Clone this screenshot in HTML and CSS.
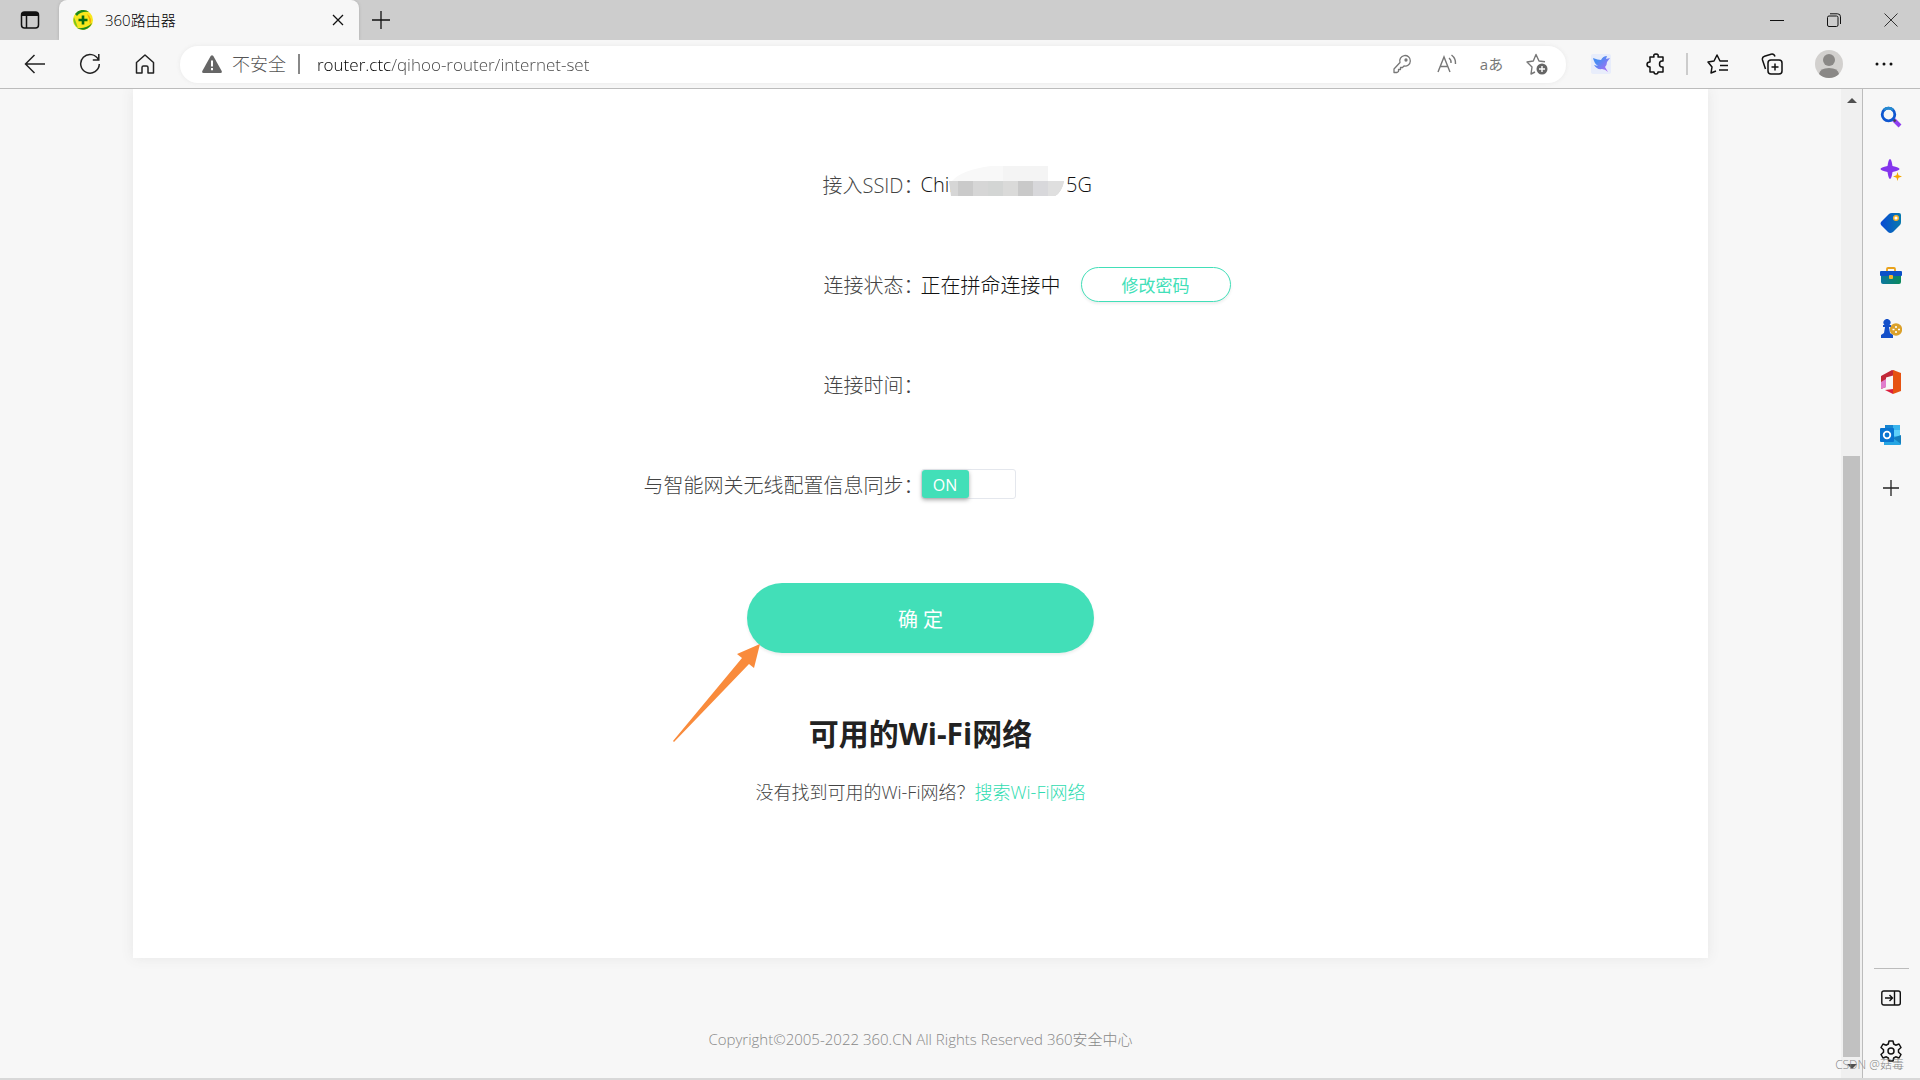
FILE: index.html
```html
<!DOCTYPE html>
<html lang="zh-CN">
<head>
    <meta charset="UTF-8">
    <meta name="viewport" content="width=device-width, initial-scale=1.0">
    <title>360路由器</title>
    <link rel="stylesheet" href="styles.css">
</head>
<body>

<header class="tab-bar">
    <button class="icon-btn tab-menu" aria-label="标签页操作">
        <svg width="20" height="20" viewBox="0 0 20 20" fill="none" stroke="#111" stroke-width="1.5"><rect x="1.5" y="2" width="17" height="16" rx="3"/><path d="M2 4.500h16M6.500 6v12"/><path d="M2 4h16" stroke-width="4"/></svg>
    </button>
    <div class="tab">
        <svg width="20" height="20" viewBox="0 0 20 20"><circle cx="10" cy="10" r="10" fill="#f8e71c"/><path d="M2 4A10 10 0 0 1 16 2Q8 1 4 6ZM4 18a10 10 0 0 0 15-5q-5 6-15 5Z" fill="#1d8a1d"/><path d="M1 7q-2 6 4 11-2-6-4-11Z" fill="#7ac520"/><path d="M14 4q6 4 3 11 0-6-3-11Z" fill="#f5a800"/><path d="M10 5.500v9M5.500 10h9" stroke="#066b12" stroke-width="2.600"/></svg>
        <span class="tab-title">360路由器</span>
        <button class="icon-btn" aria-label="关闭标签页">
            <svg width="12" height="12" viewBox="0 0 12 12" stroke="#111" stroke-width="1.300"><path d="M1 1l10 10M11 1L1 11"/></svg>
        </button>
    </div>
    <button class="icon-btn new-tab" aria-label="新建标签页">
        <svg width="18" height="18" viewBox="0 0 18 18" stroke="#111" stroke-width="1.300"><path d="M9 0v18M0 9h18"/></svg>
    </button>
    <div class="window-controls">
        <button class="icon-btn" aria-label="最小化"><svg width="14" height="14" viewBox="0 0 14 14" stroke="#111"><path d="M0 7.500h14"/></svg></button>
        <button class="icon-btn" aria-label="还原"><svg width="14" height="14" viewBox="0 0 14 14" fill="none" stroke="#111"><rect x=".5" y="3" width="10.500" height="10.500" rx="1.500"/><path d="M3 .8h7.500a3 3 0 0 1 3 3V11"/></svg></button>
        <button class="icon-btn" aria-label="关闭"><svg width="14" height="14" viewBox="0 0 14 14" stroke="#333"><path d="M.5.5l13 13M13.500.5l-13 13"/></svg></button>
    </div>
</header>

<nav class="toolbar">
    <div class="nav-buttons">
        <button class="icon-btn" aria-label="后退"><svg width="22" height="22" viewBox="0 0 22 22" fill="none" stroke="#222" stroke-width="1.500"><path d="M21 11H1.500M10.500 2l-9 9 9 9"/></svg></button>
        <button class="icon-btn" aria-label="刷新"><svg width="22" height="22" viewBox="0 0 22 22" fill="none" stroke="#222" stroke-width="1.500"><path d="M19.500 7A9.300 9.300 0 1 0 20.300 11M19.800 1v6h-6"/></svg></button>
        <button class="icon-btn" aria-label="主页"><svg width="20" height="20" viewBox="0 0 20 20" fill="none" stroke="#222" stroke-width="1.500" stroke-linejoin="round"><path d="M1.500 8.500L10 1l8.500 7.500V19H13v-5.500q0-1.500-1.500-1.500h-3Q7 12 7 13.500V19H1.500Z"/></svg></button>
    </div>
    <div class="address-bar">
        <svg width="20" height="18" viewBox="0 0 20 18"><path d="M8.700 1Q10-.7 11.300 1l8.400 15q.6 2-1.200 2h-17Q-.3 18 .3 16Z" fill="#666"/><path d="M10 5.500v6M10 13v2.200" stroke="#fff" stroke-width="2"/></svg>
        <label class="security" for="url">不安全</label>
        <input class="url" id="url" type="text" value="router.ctc/qihoo-router/internet-set" spellcheck="false">
        <div class="address-icons">
            <button class="icon-btn" aria-label="密码"><svg width="20" height="20" viewBox="0 0 20 20" fill="none" stroke="#777" stroke-width="1.300" stroke-linejoin="round"><path d="M8 8.500A5.300 5.300 0 1 1 12 12l-1.500 1.500h-2v2h-2v2L5 18.500H2V15Z"/><circle cx="14" cy="6" r="1" fill="#777"/></svg></button>
            <button class="icon-btn" aria-label="朗读"><svg width="20" height="20" viewBox="0 0 20 20" fill="none" stroke="#777" stroke-width="1.400"><path d="M1 18L7 3l6 15M3.200 12.500h7.600M12 4q2.500 2 2 5M14.500 1q4.500 3.500 4 9"/></svg></button>
            <button class="icon-btn translate" aria-label="翻译">aあ</button>
            <button class="icon-btn" aria-label="收藏"><svg width="22" height="22" viewBox="0 0 22 22" fill="none" stroke="#777" stroke-width="1.400" stroke-linejoin="round"><path d="M9 19l-4 2 1-7-5-5 6.300-1L10 1.500 13 8l6 .8"/><circle cx="16" cy="16" r="5.500" fill="#666" stroke="none"/><path d="M16 13v6M13 16h6" stroke="#fff"/></svg></button>
        </div>
    </div>
    <div class="extensions">
        <button class="icon-btn" aria-label="迅雷"><svg width="20" height="20" viewBox="0 0 20 20"><defs><linearGradient id="bird" x1="0" y1="0" x2="1" y2="1"><stop offset="0.300" stop-color="#4b8df3"/><stop offset="1" stop-color="#c266f5"/></linearGradient></defs><rect width="20" height="20" rx="2" fill="#e8edfb"/><path d="M2 4q5 2 8 2 2-4 6-4l-1 3 4-1-3 4q0 3-2 5l3 5q-3-3-6-3-5 1-8-4l4 1Q3 9 2 4Z" fill="url(#bird)"/></svg></button>
        <button class="icon-btn" aria-label="扩展"><svg width="20" height="22" viewBox="0 0 20 22" fill="none" stroke="#111" stroke-width="1.500" stroke-linejoin="round"><path d="M4 4h4q-1-3 2-3t2 3h5v4h-1q-2.500 0-2.500 3t2.500 3h1v5h-5q0 2-2 2t-2-2H4v-5q-3 0-3-2.500T4 9Z"/></svg></button>
    </div>
    <div class="profile">
        <button class="icon-btn" aria-label="收藏夹"><svg width="22" height="20" viewBox="0 0 22 20" fill="none" stroke="#111" stroke-width="1.500" stroke-linejoin="round"><path d="M9 17l-5 2 1-6-4-5 6-1 3-6 3 6h8M13 11.500h8M12 16h9"/></svg></button>
        <button class="icon-btn" aria-label="集锦"><svg width="22" height="22" viewBox="0 0 22 22" fill="none" stroke="#111" stroke-width="1.500"><rect x="7" y="7" width="14" height="14" rx="3"/><path d="M14 10.500v7M10.500 14h7M4.500 16L1.500 7Q.8 4 3.500 3.200L10 1.200q3-.7 4 2.300"/></svg></button>
        <button class="icon-btn" aria-label="个人资料"><svg width="28" height="28" viewBox="0 0 28 28"><circle cx="14" cy="14" r="14" fill="#d2d0ce"/><circle cx="14" cy="10" r="6" fill="#8a8886"/><path d="M4 24q1-6 10-6t10 6q-4 4-10 4T4 24Z" fill="#8a8886"/></svg></button>
        <button class="icon-btn" aria-label="更多"><svg width="18" height="6" viewBox="0 0 18 6" fill="#111"><circle cx="2" cy="3" r="1.500"/><circle cx="9" cy="3" r="1.500"/><circle cx="16" cy="3" r="1.500"/></svg></button>
    </div>
</nav>

<div class="browser-body">
    <div class="page">
        <main class="card">
            <div class="row">
                <span class="row-label">接入SSID：</span>
                <div class="row-value">Chin
                    <svg class="mosaic" width="115" height="30" viewBox="0 0 115 30">
                        <path d="M3 15Q12 4 42 0h57v15Z" fill="#f8f8f8"/>
                        <path d="M54 0h45v15H54Z" fill="#f4f4f4"/>
                        <path d="M0 15h115q-2 11-9 15H2Z" fill="#d6d6d6"/>
                        <path d="M9 15h15v15H9Z" fill="#cacaca"/>
                        <path d="M39 15h15v15H39Z" fill="#d3d5d4"/>
                        <path d="M54 15h15v15H54Z" fill="#dadad9"/>
                        <path d="M69 15h15v15H69Z" fill="#c9c9c9"/>
                        <path d="M84 15h15v15H84Z" fill="#d8d8db"/>
                        <path d="M99 15h16q-2 11-9 15h-7Z" fill="#dfdfdf"/>
                    </svg>5G</div>
            </div>
            <div class="row">
                <span class="row-label">连接状态：</span>
                <div class="row-value">正在拼命连接中 <button class="btn-outline">修改密码</button></div>
            </div>
            <div class="row">
                <span class="row-label">连接时间：</span>
                <div class="row-value"></div>
            </div>
            <div class="row">
                <label class="row-label" for="sync">与智能网关无线配置信息同步：</label>
                <div class="row-value">
                    <span class="switch"><input id="sync" type="checkbox" checked><span class="switch-knob">ON</span></span>
                </div>
            </div>
            <div class="submit">
                <button class="btn-primary">确 定</button>
                <svg class="arrow" width="88" height="98" viewBox="0 0 88 98"><path d="M87 0L81 24l-5-4L1 98 0 97 69 14l-5-4Z" fill="#f98b3c"/></svg>
            </div>
            <h2 class="wifi-title">可用的Wi-Fi网络</h2>
            <p class="wifi-tip">没有找到可用的Wi-Fi网络？<a href="#">搜索Wi-Fi网络</a></p>
        </main>
        <footer class="footer">Copyright©2005-2022 360.CN All Rights Reserved 360安全中心</footer>
    </div>

    <div class="scrollbar">
        <svg width="10" height="5" viewBox="0 0 10 5"><path d="M0 5L5 0l5 5Z" fill="#505050"/></svg>
        <div class="scroll-thumb"></div>
        <svg width="10" height="5" viewBox="0 0 10 5"><path d="M0 0l5 5 5-5Z" fill="#505050"/></svg>
    </div>

    <aside class="sidebar">
        <button class="icon-btn" aria-label="搜索"><svg width="22" height="22" viewBox="0 0 22 22" fill="none"><path d="M13.500 13.500L20 20" stroke="#8f3fef" stroke-width="4"/><path d="M12.500 12.500l3 3" stroke="#444" stroke-width="2"/><circle cx="8.500" cy="8.500" r="6.300" stroke="#0f56d0" stroke-width="2.800"/><path d="M4 4a6.300 6.300 0 0 1 9 0" stroke="#258bd0" stroke-width="2.800"/></svg></button>
        <button class="icon-btn" aria-label="发现"><svg width="22" height="22" viewBox="0 0 22 22"><path d="M10 0q1.500 0 2.500 7 7 1.500 7 3t-7 3q-1 7-2.500 7t-2.500-7q-7-1.500-7-3t7-3Q8.500 0 10 0Z" fill="#8435ed"/><path d="M17.500 13l1 3.300L22 17.500l-3.500 1.200-1 3.300-1-3.300L13 17.500l3.500-1.200Z" fill="#f5a800"/></svg></button>
        <button class="icon-btn" aria-label="购物"><svg width="22" height="22" viewBox="0 0 22 22"><defs><linearGradient id="tag"><stop stop-color="#0849d5"/><stop offset="1" stop-color="#087aad"/></linearGradient></defs><path d="M12 1h7q2 0 2 2v7q0 2-1 3l-7 7q-3 2-5 0l-7-7q-1-2 0-3l8-8q1-1 3-1Z" fill="url(#tag)"/><circle cx="16" cy="6" r="2.300" fill="#fff" stroke="#f8b32b" stroke-width="1.500"/></svg></button>
        <button class="icon-btn" aria-label="工具"><svg width="22" height="18" viewBox="0 0 22 18"><defs><linearGradient id="box"><stop stop-color="#0b77a0"/><stop offset="1" stop-color="#0b8a5c"/></linearGradient></defs><path d="M7 5V2q0-1 1-1h6q1 0 1 1v3" fill="none" stroke="#e9a21b" stroke-width="1.800"/><path d="M1 7h20v8q0 2-2 2H3q-2 0-2-2Z" fill="url(#box)"/><rect y="4" width="22" height="5" rx="1" fill="#0c50c8"/><rect x="9" y="8" width="4" height="4" rx="1" fill="#f8b32b"/></svg></button>
        <button class="icon-btn" aria-label="游戏"><svg width="22" height="20" viewBox="0 0 22 20"><circle cx="16" cy="10.500" r="6.200" fill="#dba12b"/><path d="M1 19v-3l3-2 1-6H3V6h1.500a3.500 3.500 0 1 1 5 0H11v2H9l1 6 3 2v3Z" fill="#1450c9"/><path d="M16 7v2M16 12v2M12.500 10.500h2M18 10.500h2" stroke="#fff" stroke-width="1.600"/></svg></button>
        <button class="icon-btn" aria-label="Office"><svg width="22" height="24" viewBox="0 0 22 24"><path d="M1 6L12 0l3 1v4L6 7.500V17l-5 2Z" fill="#c22938"/><path d="M1 12l5-3v8l-5 2Z" fill="#e07ccc"/><path d="M13 0l8 3v18l-8 3V5Z" fill="#e65312"/><path d="M5 20l8-1v5Z" fill="#db1f3c"/></svg></button>
        <button class="icon-btn" aria-label="Outlook"><svg width="22" height="22" viewBox="0 0 22 22"><path d="M5 1h15v19H5Z" fill="#39b4ee"/><path d="M5 1h8v5H5Z" fill="#1684d0"/><path d="M13 6h7v6h-7Z" fill="#5ed1fa"/><path d="M4 13h17v7q0 1-1 1H4Z" fill="#26a5e3"/><path d="M21 11v9l-8-6Z" fill="#147fbd"/><rect y="4" width="14" height="14" rx="1" fill="#0875d1"/><circle cx="7" cy="11" r="3.300" fill="none" stroke="#fff" stroke-width="1.800"/></svg></button>
        <button class="icon-btn" aria-label="添加"><svg width="16" height="16" viewBox="0 0 16 16" stroke="#222" stroke-width="1.300"><path d="M8 0v16M0 8h16"/></svg></button>
        <div class="sidebar-bottom">
            <button class="icon-btn" aria-label="隐藏边栏"><svg width="20" height="16" viewBox="0 0 20 16" fill="none" stroke="#111" stroke-width="1.400"><rect x=".8" y="1" width="18.500" height="14" rx="2"/><path d="M13.500 1v14M4 8h7M8.500 5l3 3-3 3"/></svg></button>
            <button class="icon-btn" aria-label="设置"><svg width="22" height="22" viewBox="0 0 22 22" fill="none" stroke="#111" stroke-width="1.500" stroke-linejoin="round"><path d="M9 1h4l.7 3 2 1.200L19 4l2 3.500-2.500 2.300v2.400L21 14.500 19 18l-3.300-1.200-2 1.200-.7 3H9l-.7-3-2-1.200L3 18l-2-3.500 2.500-2.300V9.800L1 7.500 3 4l3.300 1.200 2-1.200Z"/><circle cx="11" cy="11" r="3"/></svg></button>
        </div>
    </aside>
</div>
<span class="watermark">CSDN @菇毒</span>

</body>
</html>
```
FILE: styles.css
```css
* {
    box-sizing: border-box;
}
body {
    display: flex;
    flex-direction: column;
    height: 100vh;
    margin: 0;
    overflow: hidden;
    border-bottom: 2px solid #d8d8d8;
    background-color: #f7f7f7;
    color: #111;
    font-family: "Open Sans", "Noto Sans CJK SC", sans-serif;
    font-weight: 300;
}
button, input {
    font: inherit;
}
svg {
    display: block;
    flex: none;
}
.icon-btn {
    display: flex;
    align-items: center;
    justify-content: center;
    flex: none;
    padding: 0;
    border: 0;
    background: none;
}

/* tab bar */
.tab-bar {
    display: flex;
    align-items: center;
    height: 40px;
    flex: none;
    background-color: #cdcdcd;
}
.tab-menu {
    width: 59px;
}
.tab {
    display: flex;
    align-items: center;
    gap: 12px;
    width: 300px;
    height: 40px;
    padding: 0 15px 0 14px;
    border-radius: 8px 8px 0 0;
    background-color: #f7f7f7;
    box-shadow: 0 0 3px #aaa;
    color: #000;
    font-size: 15px;
    line-height: 20px;
}
.tab-title {
    flex: 1;
}
.new-tab {
    width: 44px;
}
.window-controls {
    display: flex;
    margin-left: auto;
    padding-right: 1px;
}
.window-controls .icon-btn {
    width: 57px;
    height: 38px;
}

/* toolbar */
.toolbar {
    display: flex;
    align-items: center;
    height: 49px;
    flex: none;
    border-bottom: 1px solid #bcbcbc;
    background-color: #f7f7f7;
}
.nav-buttons {
    display: flex;
    padding: 0 8px 0 7px;
}
.nav-buttons .icon-btn {
    width: 55px;
}
.address-bar {
    display: flex;
    align-items: center;
    flex: 1;
    height: 37px;
    padding: 0 7px 0 22px;
    border-radius: 18px;
    background-color: #fff;
    box-shadow: 0 0 4px #e8e8e8;
}
.security {
    margin: 0 17px 0 10px;
    padding-right: 12px;
    border-right: 2px solid #888;
    color: #555;
    font-size: 18px;
    line-height: 20px;
}
.url {
    flex: 1;
    padding: 0;
    border: 0;
    outline: 0;
    background: linear-gradient(90deg, #000 74px, #444 74px);
    -webkit-background-clip: text;
    background-clip: text;
    -webkit-text-fill-color: transparent;
    font-size: 17px;
}
.address-icons {
    display: flex;
}
.address-icons .icon-btn {
    width: 45px;
}
.translate {
    color: #777;
    font-size: 15px;
    font-weight: 400;
    line-height: 20px;
}
.extensions {
    display: flex;
    gap: 35px;
    margin-right: 19px;
    padding: 0 20px 0 25px;
    border-right: 2px solid #ccc;
}
.profile {
    display: flex;
    align-items: center;
    gap: 32px;
    padding-right: 27px;
}

/* body */
.browser-body {
    display: flex;
    flex: 1;
    min-height: 0;
}
.page {
    flex: 1;
    overflow: hidden;
}
.card {
    margin: 0 133px;
    padding: 45px 0 154px;
    background-color: #fff;
    box-shadow: 0 0 12px #e6e6e6;
    text-align: center;
}
.row {
    display: grid;
    grid-template-columns: 1fr 1fr;
    align-items: center;
    height: 100px;
    font-size: 20px;
}
.row-label {
    margin-right: -3px;
    color: #444;
    text-align: right;
}
.row-value {
    display: flex;
    align-items: center;
}
.mosaic {
    margin: 0 2px 6px -12px;
}
.btn-outline {
    width: 150px;
    height: 35px;
    margin-left: 20px;
    padding: 0;
    border: 1px solid #42dfb8;
    border-radius: 18px;
    background-color: #fff;
    box-shadow: 0 2px 3px #eee;
    color: #42dfb8;
    font-size: 17px;
    font-weight: 400;
}
.switch {
    position: relative;
    display: flex;
    width: 95px;
    height: 30px;
    border: 1px solid #e4e7ed;
    border-radius: 3px;
}
.switch input {
    position: absolute;
    inset: 0;
    margin: 0;
    opacity: 0;
}
.switch-knob {
    width: 47px;
    border-radius: 3px;
    background-color: #42dfb8;
    box-shadow: 0 2px 4px #aaa;
    color: #fff;
    font-size: 16px;
    font-weight: 400;
    line-height: 30px;
    text-align: center;
}
.submit {
    position: relative;
    width: 347px;
    margin: 49px auto 61px;
}
.btn-primary {
    display: block;
    width: 100%;
    height: 70px;
    border: 0;
    border-radius: 35px;
    background-color: #42dfb8;
    box-shadow: 0 2px 3px #eee;
    color: #fff;
    font-size: 20px;
    font-weight: 400;
}
.arrow {
    position: absolute;
    top: 61px;
    left: -74px;
}
.wifi-title {
    margin: 0 0 26px;
    color: #222;
    font-size: 30px;
    font-weight: 700;
    line-height: 40px;
}
.wifi-tip {
    margin: 0;
    color: #444;
    font-size: 18px;
    line-height: 24px;
}
.wifi-tip a {
    color: #2fdcb0;
    text-decoration: none;
}
.footer {
    margin-top: 71px;
    color: #888;
    font-size: 15px;
    line-height: 20px;
    text-align: center;
}

/* scrollbar */
.scrollbar {
    display: flex;
    flex-direction: column;
    align-items: center;
    width: 22px;
    padding: 9px 0;
    border-right: 1px solid #bcbcbc;
    background-color: #f0f0f0;
}
.scroll-thumb {
    width: 17px;
    height: 601px;
    margin-top: auto;
    margin-bottom: 7px;
    background-color: #c1c1c1;
}

/* sidebar */
.sidebar {
    display: flex;
    flex-direction: column;
    align-items: center;
    width: 57px;
    padding: 1px 1px 1px 0;
    background-color: #f7f7f7;
}
.sidebar .icon-btn {
    height: 53px;
}
.sidebar-bottom {
    display: flex;
    flex-direction: column;
    align-items: center;
    width: 35px;
    margin-top: auto;
    padding-top: 2px;
    border-top: 1px solid #bcbcbc;
}
.watermark {
    position: absolute;
    right: 16px;
    bottom: 6px;
    color: #888;
    font-size: 12px;
    line-height: 18px;
}
```
